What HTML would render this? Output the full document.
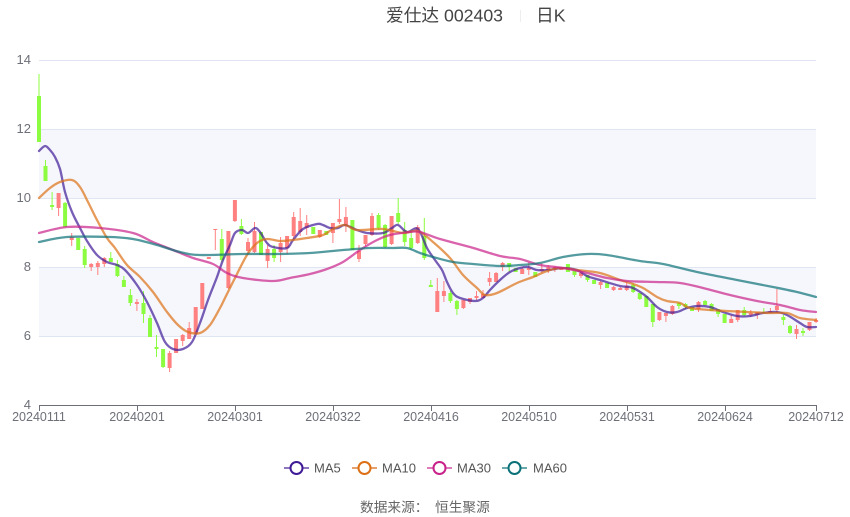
<!DOCTYPE html>
<html><head><meta charset="utf-8">
<style>
html,body{margin:0;padding:0;background:#fff;width:850px;height:517px;overflow:hidden}
svg{display:block}
text{font-family:"Liberation Sans","Noto Sans CJK SC",sans-serif}
</style></head>
<body>
<svg id="s" xmlns="http://www.w3.org/2000/svg" width="850" height="517" viewBox="0 0 850 517">
<rect x="39" y="129.5" width="777" height="69" fill="#f6f7fc"/>
<rect x="39" y="267.5" width="777" height="69" fill="#f6f7fc"/>
<g stroke="#e0e6f1" stroke-width="1">
<path d="M39 60.5H816M39 129.5H816M39 198.5H816M39 267.5H816M39 336.5H816"/>
</g>
<path d="M39 405.5H816M39.5 405V411M137.5 405V411M235.5 405V411M333.5 405V411M431.5 405V411M529.5 405V411M627.5 405V411M725.5 405V411M816.5 405V411" stroke="#6e7079" fill="none"/>
<g id="c"></g>
<g id="l" fill="none" stroke-width="2.300" stroke-linejoin="round" stroke-linecap="round"></g>
<g font-size="13" fill="#6e7079" text-anchor="end">
<text x="31" y="64">14</text><text x="31" y="133">12</text><text x="31" y="202">10</text><text x="31" y="271">8</text><text x="31" y="340">6</text><text x="31" y="409">4</text>
</g>
<g font-size="12.500" fill="#6e7079" text-anchor="middle">
<text x="39" y="421">20240111</text><text x="137" y="421">20240201</text><text x="235" y="421">20240301</text><text x="333" y="421">20240322</text><text x="431" y="421">20240416</text><text x="529" y="421">20240510</text><text x="627" y="421">20240531</text><text x="725" y="421">20240624</text><text x="816" y="421">20240712</text>
</g>
<text x="386" y="21.5" font-size="17.700" fill="#444">爱仕达 002403</text>
<path d="M520.5 10V22" stroke="#eee"/>
<text x="536" y="21.5" font-size="17.700" fill="#444">日K</text>
<g fill="#fff" stroke-width="2">
<path d="M284 468H309" stroke="#8d76be" stroke-width="2"/><circle cx="296.500" cy="468" r="6" stroke="#3f1a97"/>
<path d="M352 468H377" stroke="#e5a06b" stroke-width="2"/><circle cx="364.500" cy="468" r="6" stroke="#dd7015"/>
<path d="M427 468H452" stroke="#de7bba" stroke-width="2"/><circle cx="439.500" cy="468" r="6" stroke="#c9228a"/>
<path d="M502 468H527" stroke="#69a9ad" stroke-width="2"/><circle cx="514.500" cy="468" r="6" stroke="#0b7178"/>
</g>
<g font-size="13" fill="#555">
<text x="314" y="472.500">MA5</text><text x="382" y="472.500">MA10</text><text x="457" y="472.500">MA30</text><text x="533" y="472.500">MA60</text>
</g>
<text x="360" y="512" font-size="13.700" fill="#666">数据来源：</text>
<text x="435" y="512" font-size="13.700" fill="#666">恒生聚源</text>
</svg>
<script>
(function(){
var C="g74,96,142,142 g160,166,181,181 g192,205,207,210 r193,193,208,216 g202,203,227,227 r233,237,240,246 g238,238,250,250 g246,249,265,268 r263,264,267,271 r261,263,267,275 r257,258,264,267 g252,258,262,262 g260,264,276,277 g276,280,287,287 g289,295,303,306 r299,302,304,311 g291,303,314,323 g315,318,337,337 g335,347,349,357 g349,349,367,368 r351,353,368,372 r339,339,353,353 r334,335,341,346 r322,328,339,339 r307,307,334,334 r283,283,309,309 r257,257,259,259 r229,229,230,250 g229,239,260,262 r231,231,288,289 r200,200,221,222 g219,226,234,235 r238,242,251,253 r222,231,252,253 g232,232,255,255 r245,249,261,268 g245,249,258,262 r237,243,252,262 r236,236,248,254 r212,217,236,240 r208,221,232,236 r215,223,228,235 g227,227,234,234 r230,230,237,238 g231,231,235,235 r223,223,233,243 r199,219,222,224 r207,217,226,232 g220,220,250,250 r245,251,259,262 r235,235,244,246 r213,216,235,236 g213,215,228,230 g224,225,247,248 r216,216,244,245 g198,213,222,224 g222,230,242,246 g230,238,248,250 r225,227,243,244 g218,236,258,260 g280,285,287,287 r278,291,312,312 r281,291,296,302 g291,293,301,303 g300,301,309,315 r300,300,308,309 r298,298,302,304 r291,296,298,300 r290,294,298,298 r272,278,282,286 r272,273,282,282 r262,263,267,271 g263,263,267,272 g268,268,272,272 r267,269,274,274 r262,268,270,275 g272,272,277,277 r263,269,271,273 r265,267,270,273 r266,267,269,272 r267,267,270,270 g264,264,272,272 g271,271,275,277 r272,273,276,278 g275,275,280,282 g280,280,284,284 r281,282,285,289 g283,283,288,288 r286,287,290,291 r287,288,290,290 r282,286,290,291 g283,285,292,293 g293,293,299,300 g296,296,307,307 g304,304,322,327 r312,312,320,321 r313,313,316,322 r305,306,314,315 g302,303,306,309 g303,304,307,309 g307,307,311,311 r301,302,309,312 g300,301,305,305 g303,304,311,311 g309,309,314,317 g314,314,323,323 r315,319,323,323 r310,310,320,322 g307,310,315,316 r310,313,315,317 r312,312,315,319 g308,312,313,313 r308,311,313,313 r289,306,310,313 g315,317,320,325 g325,326,333,334 r325,329,334,339 g328,331,333,336 r322,322,330,331 r318,320,322,323".split(" ");
var L=[
["#3f1a97","39,151 45,146 50,150 55,157 60,169 65,192 72,212 80,228 87,241 97,255 107,262 117,265 125,270 137,285 147,302 157,323 165,342 173,349 183,349 192,342 200,323 208,300 217,277 223,260 230,245 235,233 242,230 248,233 255,228 260,232 267,243 273,247 287,248 293,240 303,229 317,224 323,225 330,228 338,228 345,225 357,230 367,233 383,233 392,228 398,225 407,232 418,229 427,248 435,260 442,270 447,282 453,293 460,298 475,301 483,298 490,290 500,280 510,272 520,268 528,267 537,270 548,270 563,268 577,270 587,276 600,280 620,286 630,287 637,290 647,297 657,307 667,312 677,312 687,308 697,306 710,307 723,312 737,316 750,316 763,313 777,312 787,315 800,323 807,327 816,327"],
["#dd7015","39,198 50,188 60,182 72,180 80,187 88,202 97,220 107,238 115,248 127,265 140,277 153,292 167,312 178,325 188,332 200,333 210,325 220,308 225,298 235,278 247,255 257,243 267,239 280,241 293,240 307,238 323,235 333,229 345,225 357,230 383,229 403,233 418,231 433,242 450,258 463,275 477,288 485,295 497,293 517,283 533,277 547,271 560,268 577,270 600,273 620,280 630,283 643,288 657,297 667,301 680,303 690,308 710,310 727,311 747,312 770,313 787,313 800,318 816,320"],
["#c9228a","39,233 67,227 100,228 133,233 153,242 173,250 193,258 213,264 227,273 243,278 273,281 290,278 310,274 327,269 343,262 360,250 377,240 390,235 410,232 420,232 440,239 470,247 500,256 520,259 540,265 563,268 587,273 607,278 627,281 656,282 680,283 703,288 730,295 757,301 780,305 800,310 816,312"],
["#0b7178","39,242 67,237 110,237 133,239 157,245 180,252 200,255 243,254 277,254 310,253 343,250 370,248 393,248 407,248 420,253 433,257 453,262 473,264 500,266 520,265 540,263 563,257 587,254 607,255 640,261 663,264 697,272 737,280 773,287 797,292 816,297"]];
var h1="",i;
for(i=0;i<C.length;i++){
 var c=C[i],col=c[0]=="r"?"#ff8080":"#8cfc40",v=c.slice(1).split(",").map(Number),x=39+i*6.53;
 var bt=Math.min(v[1],v[2]),bb=Math.max(v[1],v[2]);
 h1+='<path d="M'+x.toFixed(1)+' '+v[0]+'V'+v[3]+'" stroke="'+col+'" stroke-width="1"/>';
 h1+='<rect x="'+(x-2).toFixed(1)+'" y="'+bt+'" width="4" height="'+Math.max(bb-bt,1)+'" fill="'+col+'"/>';
}
document.getElementById("c").innerHTML=h1;
var h2="";
L.forEach(function(l){
 var p=l[1].split(" ").map(function(s){return s.split(",").map(Number)}),d="M"+p[0].join(" ");
 for(var k=0;k<p.length-1;k++){
  var a=p[Math.max(k-1,0)],b=p[k],e=p[k+1],f=p[Math.min(k+2,p.length-1)];
  d+="C"+(b[0]+(e[0]-a[0])/6).toFixed(1)+" "+(b[1]+(e[1]-a[1])/6).toFixed(1)+" "+(e[0]-(f[0]-b[0])/6).toFixed(1)+" "+(e[1]-(f[1]-b[1])/6).toFixed(1)+" "+e[0]+" "+e[1];
 }
 h2+='<path d="'+d+'" stroke="'+l[0]+'" stroke-opacity=".7"/>';
});
document.getElementById("l").innerHTML=h2;
})();
</script>
</body></html>
